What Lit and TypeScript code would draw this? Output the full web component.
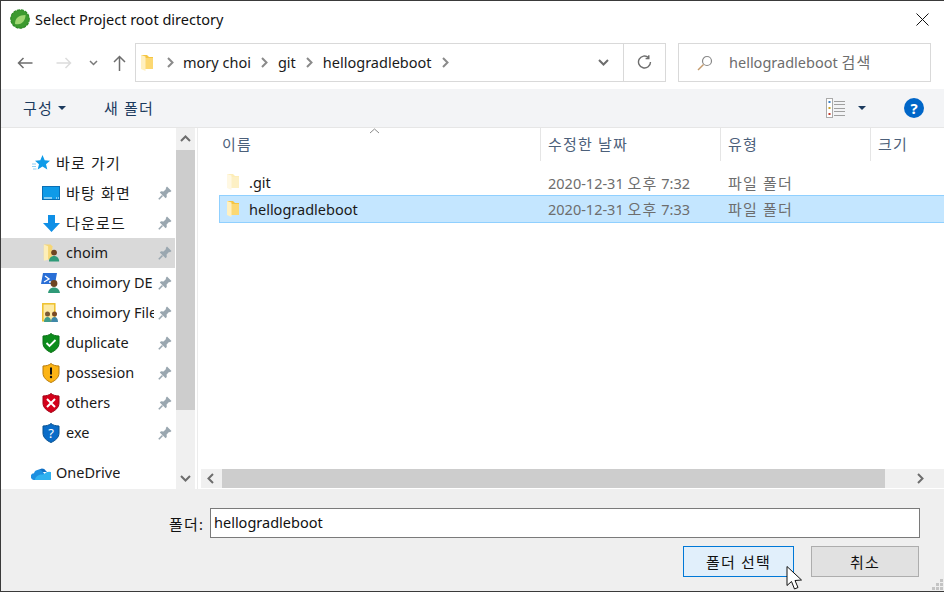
import { LitElement, css, html, svg } from "lit";
import { customElement } from "lit/decorators.js";

// hangul runs are set wider than the latin text around them
const mix = (text: string) =>
  text.split(/([가-힣]+(?: [가-힣]+)*)/).map((part, i) => (i % 2 ? html`<span class="ko">${part}</span>` : part));

const chevron = (dir: "up" | "down" | "left" | "right", color = "#6d6d6d") => {
  const pts = {
    up: "1,7 5.5,2.5 10,7",
    down: "1,3 5.5,7.5 10,3",
    left: "7,1 2.5,5.5 7,10",
    right: "3,1 7.5,5.5 3,10",
  }[dir];
  return html`<svg width="11" height="11" viewBox="0 0 11 11"><polyline points=${pts} fill="none" stroke=${color} stroke-width="2"/></svg>`;
};

const folder = (w = 12, h = 16, pale = false) => html`<svg width=${w} height=${h} viewBox="0 0 12 16">
  <path d="M0 0h6l2 2h4v12H4z" fill=${pale ? "#fdedb8" : "#f5c542"}/>
  <path d="M3 3h9v11H3z" fill=${pale ? "#fdf0c4" : "#fcd872"}/>
  <path d="M0 0l4.500 1.500V16L0 14z" fill=${pale ? "#fff8e3" : "#fff0c0"}/>
</svg>`;

const person = svg`<circle cx="13" cy="9.500" r="3.400" fill="#6e4522"/><path d="M7 20c0-4 2.500-6.500 6-6.500s6 2.500 6 6.500z" fill="#2f9a78"/>`;

const shield = (fill: string, edge: string, mark: unknown) => html`<svg width="18" height="20" viewBox="0 0 18 20">
  <path d="M9 .5c2 1.800 5 2.500 8 2.500v7c0 4.500-3.500 7.500-8 9.500C4.500 17.500 1 14.500 1 10V3c3 0 6-.7 8-2.500z" fill=${fill} stroke=${edge}/>
  ${mark}
</svg>`;

const icons: Record<string, unknown> = {
  star: html`<svg width="18" height="17" viewBox="0 0 18 17">
    <path d="M10.500 0l2.200 5.300 5.300.4-4 3.500 1.300 5.300-4.800-2.900-4.800 2.900 1.300-5.300-4-3.500 5.300-.4z" fill="#0f9be8"/>
    <path d="M0 9h4M0 11.500h4M1 14h3.500" stroke="#8fd0f5" stroke-width="1"/>
  </svg>`,
  desktop: html`<svg width="18" height="14" viewBox="0 0 18 14">
    <rect x=".5" y=".5" width="17" height="13" fill="#0f9be8" stroke="#0a6fb5"/>
    <path d="M2 12h8M14 12h1M16 12h1" stroke="#fff"/>
  </svg>`,
  download: html`<svg width="17" height="17" viewBox="0 0 17 17"><path d="M5 0h7v8h5l-8.500 9L0 8h5z" fill="#0f8fe6"/></svg>`,
  user: html`<svg width="17" height="20" viewBox="0 0 20 20">
    <path d="M1 0h8l2 2v15l-10 1z" fill="#f6d675"/><path d="M1 0l5 2v16l-5 1z" fill="#fdeeb7"/>${person}
  </svg>`,
  ps: html`<svg width="20" height="20" viewBox="0 0 20 20">
    <path d="M2 0h14l-2 11H0z" fill="#2a6fd6"/><path d="M4 3l4 3-5 3M8 9h3" fill="none" stroke="#fff" stroke-width="1.300"/>
    <g transform="translate(0 1)">${person}</g>
  </svg>`,
  files: html`<svg width="18" height="20" viewBox="0 0 18 20">
    <rect x=".8" y=".8" width="12" height="17" fill="#fdeaa5" stroke="#eec02b" stroke-width="1.500"/>
    <circle cx="5.500" cy="11" r="2.500" fill="#7a5a34"/><path d="M2 19c0-3.500 1.500-5 3.500-5S9 15.500 9 19z" fill="#3f9c8a"/>
    <circle cx="12.500" cy="11" r="2.500" fill="#7a4a24"/><path d="M9 19c0-3.500 1.500-5 3.500-5s3.500 1.500 3.500 5z" fill="#3f88a8"/>
  </svg>`,
  ok: shield("#0c8c1c", "#0a6f16", svg`<path d="M4.500 10l3 3 6-6" fill="none" stroke="#fff" stroke-width="1.800"/>`),
  warn: shield("#fcb415", "#b87b0a", svg`<path d="M9 4.500v7" stroke="#111" stroke-width="2"/><circle cx="9" cy="14" r="1.200" fill="#111"/>`),
  err: shield("#d4001a", "#a00014", svg`<path d="M5 6l8 8M13 6l-8 8" stroke="#fff" stroke-width="2"/>`),
  help: shield("#0a6cc8", "#07508f", svg`<text x="9" y="14.500" text-anchor="middle" font-size="13" font-family="Noto Sans" fill="#fff">?</text>`),
  cloud: html`<svg width="20" height="13" viewBox="0 0 20 13">
    <path d="M6 5a5 5 0 0 1 9-1 4 4 0 0 1 1 1H6z" fill="#0f6fc4"/>
    <path d="M3.500 13A3.400 3.400 0 0 1 3 6.200 5 5 0 0 1 12 5l6 8z" fill="#1c8fe0"/>
    <path d="M4 13c0-3 3-5.500 7-5.500 3 0 3.500-2.500 5.500-2.500a4 4 0 0 1 3 8z" fill="#2fb2f0"/>
  </svg>`,
};

const pin = html`<svg width="14" height="14" viewBox="0 0 14 14">
  <path d="M9 .5L13.500 5 12 6.200 11 6 8.600 8.500 8.800 11 7.600 12.200 1.800 6.400 3 5.200 5.500 5.400 8 3 7.800 2z" fill="#9aa7b0"/>
  <path d="M4.500 9.500L.8 13.200" stroke="#9aa7b0" stroke-width="1.600"/>
</svg>`;

interface NavItem {
  label: string;
  icon: string;
  pinned?: boolean;
  top?: boolean;
  active?: boolean;
  gap?: boolean;
}

const navItems: NavItem[] = [
  { label: "바로 가기", icon: "star", top: true },
  { label: "바탕 화면", icon: "desktop", pinned: true },
  { label: "다운로드", icon: "download", pinned: true },
  { label: "choim", icon: "user", pinned: true, active: true },
  { label: "choimory DE", icon: "ps", pinned: true },
  { label: "choimory File", icon: "files", pinned: true },
  { label: "duplicate", icon: "ok", pinned: true },
  { label: "possesion", icon: "warn", pinned: true },
  { label: "others", icon: "err", pinned: true },
  { label: "exe", icon: "help", pinned: true },
  { label: "OneDrive", icon: "cloud", top: true, gap: true },
];

const files = [
  { name: ".git", date: "2020-12-31 오후 7:32", type: "파일 폴더", selected: false },
  { name: "hellogradleboot", date: "2020-12-31 오후 7:33", type: "파일 폴더", selected: true },
];

@customElement("app-root")
export class AppRoot extends LitElement {
  static styles = css`
    :host {
      display: block;
      position: relative;
      width: 944px;
      height: 592px;
      box-sizing: border-box;
      border-top: 1px solid #3a3a3a;
      border-bottom: 1px solid #3a3a3a;
      border-left: 1px solid #3a3a3a;
      background: #fff;
      overflow: hidden;
      font-family: "Noto Sans", "Noto Sans CJK KR", sans-serif;
      font-size: 14.5px;
      color: #1a1a1a;
    }
    .ko {
      font-size: 15px;
      letter-spacing: 1.2px;
    }
    svg {
      display: block;
      flex: none;
    }
    .page {
      display: flex;
      flex-direction: column;
      height: 590px;
    }
    .title {
      display: flex;
      align-items: center;
      height: 29px;
      padding: 7px 15px 0 9px;
      box-sizing: border-box;
      color: #111;
    }
    .title .name {
      margin-left: 5px;
      flex: 1;
    }
    .nav {
      display: flex;
      height: 59px;
      padding-top: 13px;
      box-sizing: border-box;
    }
    .nav-buttons {
      display: flex;
      align-items: center;
      width: 134px;
      height: 39px;
      padding-left: 16px;
      box-sizing: border-box;
    }
    .address {
      display: flex;
      align-items: center;
      width: 489px;
      height: 39px;
      box-sizing: border-box;
      border: 1px solid #d9d9d9;
      padding-left: 5px;
    }
    .crumb {
      margin: 0 8px;
    }
    .address .text {
      margin-bottom: 2px;
    }
    .address .spacer {
      flex: 1;
    }
    .refresh {
      display: flex;
      align-items: center;
      justify-content: center;
      width: 42px;
      height: 39px;
      box-sizing: border-box;
      border: 1px solid #d9d9d9;
      border-left: none;
    }
    .search {
      display: flex;
      align-items: center;
      width: 253px;
      height: 39px;
      margin-left: 12px;
      padding-left: 18px;
      box-sizing: border-box;
      border: 1px solid #d9d9d9;
      color: #6d6d6d;
    }
    .search > span {
      margin: 0 0 2px 16px;
    }
    .toolbar {
      display: flex;
      align-items: center;
      height: 38px;
      padding-left: 22px;
      background: #f3f4f6;
      border-bottom: 1px solid #e6e6e6;
      color: #1b3a5e;
      box-sizing: content-box;
      flex: none;
    }
    .toolbar > .ko {
      margin-bottom: 2px;
    }
    .caret {
      width: 0;
      height: 0;
      border: 4px solid transparent;
      border-top: 4px solid #1b3a5e;
      border-bottom: none;
    }
    .new-folder {
      margin-left: 38px;
      flex: 1;
    }
    .views {
      display: flex;
      align-items: center;
      margin-right: 38px;
    }
    .help {
      display: flex;
      align-items: center;
      justify-content: center;
      width: 20px;
      height: 20px;
      margin-right: 20px;
      border-radius: 50%;
      background: #0066c8;
      color: #fff;
      font-weight: 700;
      font-size: 15px;
    }
    .main {
      display: flex;
      flex: 1;
      min-height: 0;
    }
    .tree {
      width: 174px;
      flex: none;
      overflow: hidden;
      padding-top: 20px;
      box-sizing: border-box;
    }
    .row {
      display: flex;
      align-items: center;
      height: 30px;
      padding-left: 40px;
      box-sizing: border-box;
    }
    .row.top {
      padding-left: 30px;
    }
    .row.gap {
      margin-top: 10px;
    }
    .row.active {
      background: #d9d9d9;
    }
    .row .slot {
      display: flex;
      justify-content: center;
      width: 20px;
      flex: none;
    }
    .row .label {
      margin-left: 5px;
      margin-bottom: 2px;
      width: 88px;
      overflow: hidden;
      white-space: nowrap;
    }
    .row.top .label {
      width: auto;
    }
    .row .pin {
      margin-left: 4px;
    }
    .vbar {
      display: flex;
      flex-direction: column;
      width: 19px;
      margin-left: 1px;
      flex: none;
      background: #f0f0f0;
    }
    .vbar .btn {
      display: flex;
      align-items: center;
      justify-content: center;
      height: 22px;
      flex: none;
    }
    .vbar .thumb {
      height: 260px;
      background: #cdcdcd;
    }
    .vbar .track {
      flex: 1;
    }
    .pane {
      display: flex;
      flex-direction: column;
      flex: 1;
      min-width: 0;
      margin-left: 2px;
      border-left: 1px solid #ececec;
      padding-left: 3px;
    }
    .head {
      display: grid;
      grid-template-columns: 321px 180px 150px 1fr;
      height: 33px;
      margin-left: 18px;
      color: #4c607a;
      position: relative;
    }
    .head div {
      display: flex;
      align-items: center;
      padding: 0 0 3px 3px;
      box-sizing: border-box;
    }
    .head div + div {
      border-left: 1px solid #e5e5e5;
      padding-left: 7px;
    }
    .sort {
      position: absolute;
      left: 150px;
      top: 0;
    }
    .list {
      flex: 1;
      padding: 9px 0 0 18px;
    }
    .file {
      display: grid;
      grid-template-columns: 328px 180px 1fr;
      height: 26px;
      padding-bottom: 2px;
      align-items: center;
      box-sizing: border-box;
      border-left: 1px solid transparent;
      color: #6d6d6d;
    }
    .file.sel {
      height: 28px;
      background: #c4e6ff;
      border: 1px solid #90d0ff;
      border-right: none;
      margin-top: -1px;
    }
    .file .fname {
      display: flex;
      align-items: center;
      gap: 10px;
      padding-left: 7px;
      color: #1a1a1a;
    }
    .file.sel .fname {
      padding-top: 2px;
    }
    .hbar {
      display: flex;
      height: 19px;
      margin-bottom: 1px;
      background: #f0f0f0;
      flex: none;
    }
    .hbar .btn {
      display: flex;
      align-items: center;
      justify-content: center;
      width: 21px;
      flex: none;
    }
    .hbar .thumb {
      width: 663px;
      background: #cdcdcd;
    }
    .hbar .track {
      flex: 1;
      display: flex;
      justify-content: flex-end;
      align-items: center;
      padding-right: 18px;
    }
    .footer {
      height: 102px;
      flex: none;
      background: #efefef;
      padding: 19px 24px 0 0;
      box-sizing: border-box;
    }
    .name-row {
      display: flex;
      align-items: center;
      justify-content: flex-end;
      gap: 7px;
      color: #111;
    }
    .input {
      display: flex;
      align-items: center;
      width: 710px;
      height: 30px;
      padding: 0 0 3px 3px;
      box-sizing: border-box;
      background: #fff;
      border: 1px solid #7a7a7a;
      color: #111;
    }
    .actions {
      display: flex;
      justify-content: flex-end;
      gap: 17px;
      margin-top: 8px;
    }
    .button {
      display: flex;
      align-items: center;
      justify-content: center;
      height: 31px;
      box-sizing: border-box;
      color: #111;
    }
    .button.primary {
      width: 111px;
      background: #e1effb;
      border: 1px solid #0078d7;
    }
    .button.cancel {
      width: 108px;
      margin-right: 1px;
      background: #e1e1e1;
      border: 1px solid #adadad;
    }
    .cursor {
      position: absolute;
      left: 785px;
      top: 565px;
    }
    .grip {
      position: absolute;
      right: 1px;
      bottom: 1px;
    }
  `;

  render() {
    return html`
      <div class="page">
        <div class="title">
          <svg width="20" height="20" viewBox="0 0 20 20">
            <circle cx="10" cy="10" r="9.300" fill="#3c9a2f"/>
            <circle cx="10" cy="10" r="9.200" fill="none" stroke="#2e8a26" stroke-width="1.200" stroke-dasharray="3 1"/>
            <path d="M5 15C5 9 9 6 15.500 6c0 5-3 9-7.500 9.300-1.200.1-2.200 0-3-.3z" fill="#9fd672"/>
          </svg>
          <span class="name">Select Project root directory</span>
          <svg width="13" height="13" viewBox="0 0 13 13"><path d="M.5.5l12 12M12.500.5l-12 12" stroke="#111" stroke-width="1"/></svg>
        </div>
        <div class="nav">
          <div class="nav-buttons">
            <svg width="16" height="12" viewBox="0 0 16 12"><path d="M15.500 6H1.500M6.500 1l-5 5 5 5" fill="none" stroke="#6d6d6d" stroke-width="1.500"/></svg>
            <svg style="margin-left:23px" width="16" height="12" viewBox="0 0 16 12"><path d="M.5 6h14M9.500 1l5 5-5 5" fill="none" stroke="#dcdcdc" stroke-width="1.500"/></svg>
            <svg style="margin-left:17px" width="9" height="6" viewBox="0 0 9 6"><path d="M1 1l3.500 3.500L8 1" fill="none" stroke="#7a7a7a" stroke-width="1.500"/></svg>
            <svg style="margin-left:15px" width="13" height="16" viewBox="0 0 13 16"><path d="M6.500 16V1.500M1 7l5.500-5.500L12 7" fill="none" stroke="#6d6d6d" stroke-width="1.500"/></svg>
          </div>
          <div class="address">
            ${folder(12, 18)}
            <span class="crumb" style="margin:0 7px 0 12px">${chevron("right", "#8a8a8a")}</span>
            <span class="text">mory choi</span>
            <span class="crumb">${chevron("right", "#8a8a8a")}</span>
            <span class="text">git</span>
            <span class="crumb">${chevron("right", "#8a8a8a")}</span>
            <span class="text">hellogradleboot</span>
            <span class="crumb">${chevron("right", "#8a8a8a")}</span>
            <span class="spacer"></span>
            <span style="margin-right:14px">${chevron("down", "#6d6d6d")}</span>
          </div>
          <div class="refresh">
            <svg width="15" height="15" viewBox="0 0 15 15"><path d="M11.500 2.500a6 6 0 1 0 2 4.500M11.800 .3v3.200H8.600" fill="none" stroke="#6d6d6d" stroke-width="1.400"/></svg>
          </div>
          <div class="search">
            <svg width="16" height="16" viewBox="0 0 16 16"><circle cx="10" cy="6" r="4.500" fill="none" stroke="#888" stroke-width="1.200"/><path d="M6.500 9.500L1 15" stroke="#c49a6c" stroke-width="1.400"/></svg>
            <span>${mix("hellogradleboot 검색")}</span>
          </div>
        </div>
        <div class="toolbar">
          <span class="ko">구성</span>
          <span class="caret" style="margin-left:5px"></span>
          <span class="new-folder ko">새 폴더</span>
          <div class="views">
            <svg width="19" height="20" viewBox="0 0 19 20">
              <rect x=".5" y=".5" width="6" height="19" fill="#fff" stroke="#aaa"/>
              <rect x="2.500" y="3" width="2" height="2" fill="#3a7fc4"/><rect x="2.500" y="9" width="2" height="2" fill="#c9a227"/><rect x="2.500" y="15" width="2" height="2" fill="#c0392b"/>
              <path d="M8 3.500h11M8 6.500h11M8 10.500h11M8 13.500h11M8 17.500h11" stroke="#a0a0a0"/>
            </svg>
            <span class="caret" style="margin-left:13px"></span>
          </div>
          <span class="help">?</span>
        </div>
        <div class="main">
          <div class="tree">
            ${navItems.map(
              (item) => html`
                <div class="row ${item.top ? "top" : ""} ${item.active ? "active" : ""} ${item.gap ? "gap" : ""}">
                  <span class="slot">${icons[item.icon]}</span>
                  <span class="label">${mix(item.label)}</span>
                  ${item.pinned ? html`<span class="pin">${pin}</span>` : ""}
                </div>
              `,
            )}
          </div>
          <div class="vbar">
            <div class="btn">${chevron("up")}</div>
            <div class="thumb"></div>
            <div class="track"></div>
            <div class="btn">${chevron("down")}</div>
          </div>
          <div class="pane">
            <div class="head">
              <svg class="sort" width="11" height="6" viewBox="0 0 11 6"><path d="M1 5l4.500-4L10 5" fill="none" stroke="#8a8a8a"/></svg>
              <div><span class="ko">이름</span></div>
              <div><span class="ko">수정한 날짜</span></div>
              <div><span class="ko">유형</span></div>
              <div><span class="ko">크기</span></div>
            </div>
            <div class="list">
              ${files.map(
                (f) => html`
                  <div class="file ${f.selected ? "sel" : ""}">
                    <span class="fname">${folder(12, 16, !f.selected)}${f.name}</span>
                    <span>${mix(f.date)}</span>
                    <span>${mix(f.type)}</span>
                  </div>
                `,
              )}
            </div>
            <div class="hbar">
              <div class="btn">${chevron("left")}</div>
              <div class="thumb"></div>
              <div class="track">${chevron("right")}</div>
            </div>
          </div>
        </div>
        <div class="footer">
          <div class="name-row">
            <span>${mix("폴더:")}</span>
            <div class="input">hellogradleboot</div>
          </div>
          <div class="actions">
            <div class="button primary">${mix("폴더 선택")}</div>
            <div class="button cancel">${mix("취소")}</div>
          </div>
        </div>
      </div>
      <svg class="grip" width="11" height="11" viewBox="0 0 11 11" fill="#c4c4c4">
        <rect x="8" y="0" width="3" height="3"/><rect x="4" y="4" width="3" height="3"/><rect x="8" y="4" width="3" height="3"/>
        <rect x="0" y="8" width="3" height="3"/><rect x="4" y="8" width="3" height="3"/><rect x="8" y="8" width="3" height="3"/>
      </svg>
      <svg class="cursor" width="17" height="25" viewBox="0 0 17 25">
        <path d="M1 .5v19l4.500-4 3 7.500 3.500-1.500-3-7 6.500-.5z" fill="#fff" stroke="#111" stroke-width="1"/>
      </svg>
    `;
  }
}
